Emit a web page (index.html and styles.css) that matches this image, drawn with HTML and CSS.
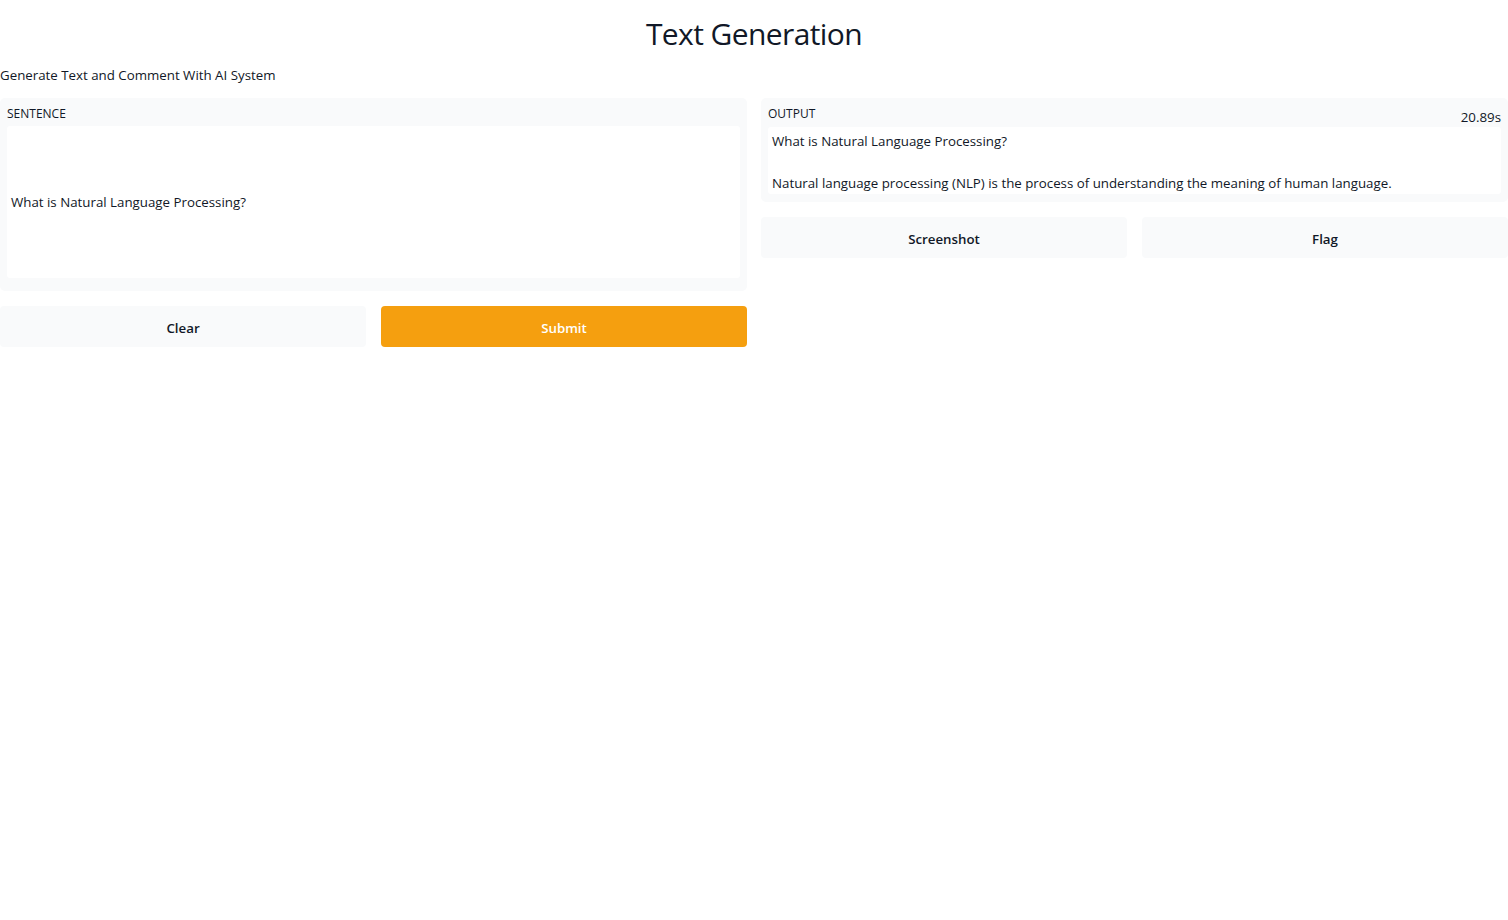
FILE: index.html
```html
<!DOCTYPE html>
<html>
<head>
<meta charset="utf-8">
<link rel="stylesheet" href="styles.css">
</head>
<body>
<h1 class="title">Text Generation</h1>
<p class="desc">Generate Text and Comment With AI System</p>
<div class="grid">
  <div class="col">
    <div class="panel panel-in">
      <div class="label">SENTENCE</div>
      <div class="input-box">What is Natural Language Processing?</div>
    </div>
    <div class="btn-row">
      <button class="btn">Clear</button>
      <button class="btn btn-primary">Submit</button>
    </div>
  </div>
  <div class="col">
    <div class="panel panel-out">
      <div class="label">OUTPUT</div>
      <div class="timer">20.89s</div>
      <div class="output-box">What is Natural Language Processing?<br><br>Natural language processing (NLP) is the process of understanding the meaning of human language.</div>
    </div>
    <div class="btn-row">
      <button class="btn">Screenshot</button>
      <button class="btn">Flag</button>
    </div>
  </div>
</div>
</body>
</html>
```
FILE: styles.css
```css
* { box-sizing: border-box; }
body {
  margin: 0;
  font-family: "Open Sans", "Noto Sans", sans-serif;
  color: #111827;
  background: #fff;
}
.title {
  margin: 14px 0 0;
  font-size: 30px;
  line-height: 40px;
  font-weight: 400;
  letter-spacing: -0.6px;
  text-align: center;
}
.desc {
  margin: 11px 0 13px;
  font-size: 13.3px;
  line-height: 20px;
}
.grid {
  display: grid;
  grid-template-columns: 1fr 1fr;
  column-gap: 14px;
  align-items: start;
}
.col {
  display: flex;
  flex-direction: column;
  gap: 15px;
}
.panel {
  position: relative;
  background: #f9fafb;
  border-radius: 5px;
  padding: 8px 7px 0;
}
.panel-in { height: 193px; }
.panel-out { height: 104px; }
.label {
  font-size: 12px;
  line-height: 16px;
  margin-bottom: 4px;
}
.panel-out .label { margin-bottom: 5px; }
.timer {
  position: absolute;
  right: 7px;
  top: 11px;
  font-size: 13.3px;
  line-height: 16px;
}
.input-box {
  background: #fff;
  border-radius: 3px;
  height: 152px;
  display: flex;
  align-items: center;
  padding-left: 4px;
  font-size: 13.3px;
}
.output-box {
  background: #fff;
  border-radius: 3px;
  height: 67px;
  padding: 4px 4px 0;
  font-size: 13.3px;
  line-height: 21px;
}
.btn-row {
  display: grid;
  grid-template-columns: 1fr 1fr;
  column-gap: 15px;
}
.btn {
  height: 41px;
  border: none;
  border-radius: 4px;
  background: #f9fafb;
  font-family: inherit;
  font-size: 13.3px;
  font-weight: 600;
  color: #111827;
  padding: 2px 0 0;
}
.btn-primary {
  background: #f59f0f;
  color: #fff;
}
```
